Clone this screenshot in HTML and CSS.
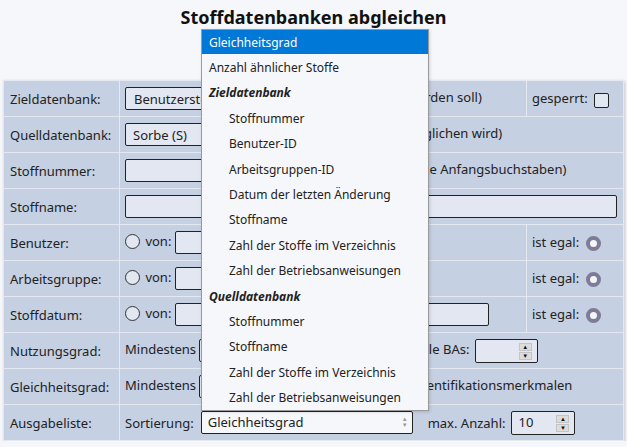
FILE: index.html
```html
<!DOCTYPE html>
<html lang="de">
  <head>
    <meta charset="UTF-8" />
    <title>Stoffdatenbanken abgleichen</title>
    <link rel="stylesheet" href="styles.css">
  </head>
  <body>
    <h1 class="title">Stoffdatenbanken abgleichen</h1>

    <table class="form">
      <colgroup>
        <col class="c-lbl">
        <col>
        <col class="c-side">
      </colgroup>
      <tr>
        <td class="lbl">Zieldatenbank:</td>
        <td><select class="sel sel-ziel"><option>Benutzerstoffe (B)</option></select> (die abgeglichen werden soll)</td>
        <td class="side">gesperrt: <span class="check"></span></td>
      </tr>
      <tr>
        <td class="lbl">Quelldatenbank:</td>
        <td colspan="2"><select class="sel sel-quelle"><option>Sorbe (S)</option></select> (die abgeglichen wird)</td>
      </tr>
      <tr>
        <td class="lbl">Stoffnummer:</td>
        <td colspan="2"><input class="txt txt-nr" type="text"> (Nummer ohne Anfangsbuchstaben)</td>
      </tr>
      <tr>
        <td class="lbl">Stoffname:</td>
        <td colspan="2"><input class="txt txt-full" type="text"></td>
      </tr>
      <tr>
        <td class="lbl">Benutzer:</td>
        <td><span class="radio"></span> von: <input class="txt txt-von" type="text"></td>
        <td class="side">ist egal: <span class="radio on"></span></td>
      </tr>
      <tr>
        <td class="lbl">Arbeitsgruppe:</td>
        <td><span class="radio"></span> von: <input class="txt txt-von" type="text"></td>
        <td class="side">ist egal: <span class="radio on"></span></td>
      </tr>
      <tr>
        <td class="lbl">Stoffdatum:</td>
        <td><span class="radio"></span> von: <input class="txt txt-datum" type="text"></td>
        <td class="side">ist egal: <span class="radio on"></span></td>
      </tr>
      <tr>
        <td class="lbl">Nutzungsgrad:</td>
        <td colspan="2">Mindestens <input class="txt txt-nutz" type="text"> % für alle BAs: <span class="spin spin-ba"><span class="spin-btns"><i>&#9650;</i><i>&#9660;</i></span></span></td>
      </tr>
      <tr>
        <td class="lbl">Gleichheitsgrad:</td>
        <td colspan="2">Mindestens <input class="txt txt-small" type="text"> Übereinstimmungen in den Identifikationsmerkmalen</td>
      </tr>
      <tr>
        <td class="lbl">Ausgabeliste:</td>
        <td colspan="2">
          <div class="row-out">
            Sortierung:
            <span class="sel sel-sort">Gleichheitsgrad<span class="updown">&#9650;<br>&#9660;</span></span>
            max. Anzahl:
            <span class="spin spin-max">10<span class="spin-btns"><i>&#9650;</i><i>&#9660;</i></span></span>
          </div>
        </td>
      </tr>
    </table>

    <!-- aufgeklappte Liste der Sortierung -->
    <ul class="dropdown">
      <li class="active">Gleichheitsgrad</li>
      <li>Anzahl ähnlicher Stoffe</li>
      <li class="group">Zieldatenbank</li>
      <li class="sub">Stoffnummer</li>
      <li class="sub">Benutzer-ID</li>
      <li class="sub">Arbeitsgruppen-ID</li>
      <li class="sub">Datum der letzten Änderung</li>
      <li class="sub">Stoffname</li>
      <li class="sub">Zahl der Stoffe im Verzeichnis</li>
      <li class="sub">Zahl der Betriebsanweisungen</li>
      <li class="group">Quelldatenbank</li>
      <li class="sub">Stoffnummer</li>
      <li class="sub">Stoffname</li>
      <li class="sub">Zahl der Stoffe im Verzeichnis</li>
      <li class="sub">Zahl der Betriebsanweisungen</li>
    </ul>
  </body>
</html>
```

FILE: styles.css
```css
* {
  margin: 0;
  padding: 0;
  box-sizing: border-box;
}
body {
  background: #f5f7fa;
  font-family: "Noto Sans", "Open Sans", sans-serif;
  font-size: 13px;
  color: #222;
  padding: 5px 3px 0;
  position: relative;
}
.title {
  font-size: 18px;
  font-weight: bold;
  text-align: center;
  color: #111;
  height: 75px;
  line-height: 24px;
}
.form {
  width: 621px;
  table-layout: fixed;
  border-collapse: collapse;
  background: #c5d0e2;
  box-shadow: 1px 1px 3px rgba(0, 0, 0, 0.2);
}
.form .c-lbl {
  width: 116px;
}
.form .c-side {
  width: 97px;
}
.form td {
  height: 36px;
  border: 1px solid #e3e8f1;
  padding: 0 5px;
  white-space: nowrap;
  overflow: hidden;
  vertical-align: middle;
}
.form td.lbl {
  padding-left: 6px;
}
.sel,
.txt,
.spin {
  display: inline-block;
  vertical-align: middle;
  height: 23px;
  background: #e2e7f2;
  border: 1px solid #222;
  border-radius: 2px;
  font: inherit;
  color: inherit;
  padding: 0 7px;
  appearance: none;
  -webkit-appearance: none;
  outline: none;
}
.sel-ziel {
  width: 175px;
  padding-left: 8px;
}
.sel-quelle {
  width: 239px;
  padding-left: 7px;
}
.txt-nr {
  width: 215px;
}
.txt-full {
  width: 492px;
}
.txt-von {
  width: 100px;
}
.txt-datum {
  width: 314px;
}
.txt-small {
  width: 40px;
}
.txt-nutz {
  width: 180px;
}
.check {
  display: inline-block;
  vertical-align: middle;
  width: 15px;
  height: 15px;
  border: 1px solid #222;
  border-radius: 2px;
  background: #e2e7f2;
  margin-left: 3px;
}
.radio {
  display: inline-block;
  vertical-align: middle;
  width: 15px;
  height: 15px;
  border: 1px solid #333;
  border-radius: 50%;
  background: #e2e7f2;
  margin-right: 2px;
  position: relative;
  top: -1px;
}
.radio.on {
  border: 4px solid #7e7b97;
  background: #f5f5f8;
  margin-left: 3px;
  margin-right: 0;
}
.row-out {
  display: flex;
  align-items: center;
}
.sel-sort {
  width: 212px;
  line-height: 21px;
  margin: 0 15px 0 7px;
  padding-left: 6px;
  position: relative;
  background: #f5f7fa;
}
.updown {
  position: absolute;
  right: 4px;
  top: 4px;
  font-size: 6px;
  line-height: 6px;
  color: #999;
}
.spin {
  position: relative;
  line-height: 21px;
  padding-left: 6px;
}
.spin-max {
  width: 64px;
  height: 24px;
  margin-left: 6px;
}
.spin-ba {
  width: 63px;
  height: 24px;
  margin-left: 2px;
}
.spin-btns {
  position: absolute;
  right: 5px;
  top: 3px;
  width: 13px;
  display: flex;
  flex-direction: column;
  gap: 1px;
}
.spin-btns i {
  display: block;
  height: 8px;
  background: #dcdcdc;
  border: 1px solid #c4c4c4;
  font-style: normal;
  font-size: 6px;
  line-height: 6px;
  text-align: center;
  color: #111;
}
.dropdown {
  position: absolute;
  left: 201px;
  top: 29px;
  width: 228px;
  height: 382px;
  list-style: none;
  background: #f6f7fa;
  border: 1px solid #9a9a9a;
  box-shadow: 1px 1px 3px rgba(0, 0, 0, 0.15);
  font-size: 12px;
}
.dropdown li {
  height: 25.4px;
  padding-top: 2px;
  line-height: 23.4px;
  padding-left: 7px;
  white-space: nowrap;
}
.dropdown li.active {
  background: #0078d7;
  color: #fff;
  height: 24px;
  padding-top: 0;
  line-height: 25px;
}
.dropdown li.group {
  font-weight: bold;
  font-style: italic;
}
.dropdown li.sub {
  padding-left: 27px;
}
```
